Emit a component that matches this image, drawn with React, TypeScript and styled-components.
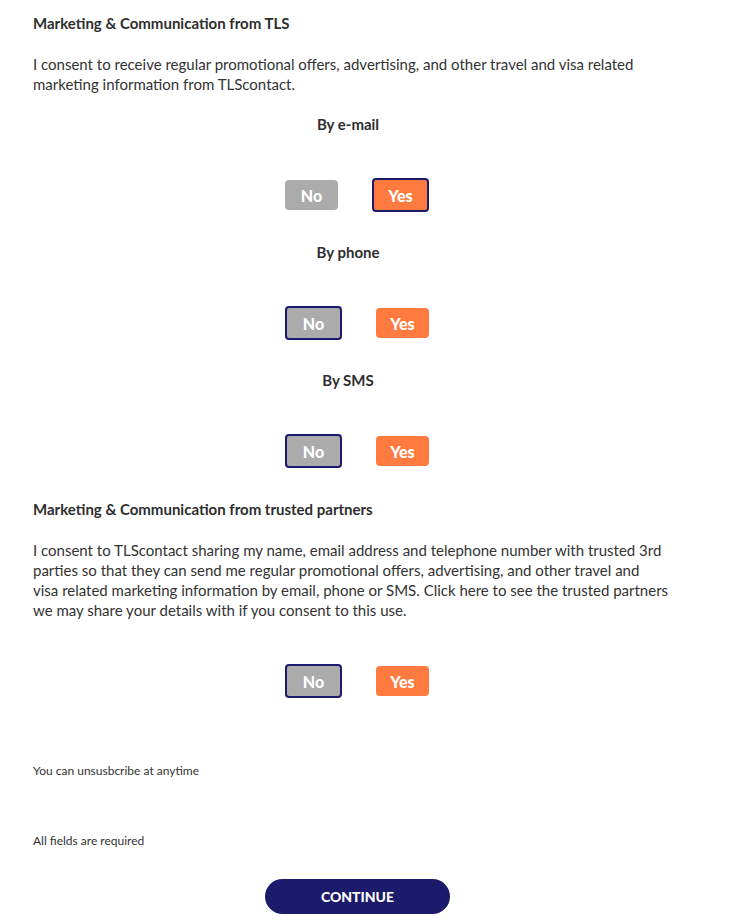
import { useState } from 'react'
import styled, { createGlobalStyle } from 'styled-components'

type Choice = 'no' | 'yes'

const GlobalStyle = createGlobalStyle`
  body {
    margin: 0;
    background: #ffffff;
    font-family: Lato, 'Open Sans', Arial, sans-serif;
    color: #333333;
  }
`

function ConsentToggle({ value, onChange }: { value: Choice; onChange: (v: Choice) => void }) {
  return (
    <StyledButtonRow>
      <StyledToggle $tone="no" $selected={value === 'no'} onClick={() => onChange('no')}>
        No
      </StyledToggle>
      <StyledToggle $tone="yes" $selected={value === 'yes'} onClick={() => onChange('yes')}>
        Yes
      </StyledToggle>
    </StyledButtonRow>
  )
}

export default function App() {
  const [email, setEmail] = useState<Choice>('yes')
  const [phone, setPhone] = useState<Choice>('no')
  const [sms, setSms] = useState<Choice>('no')
  const [partners, setPartners] = useState<Choice>('no')

  return (
    <>
      <GlobalStyle />
      <StyledPage>
        <StyledTitle>Marketing &amp; Communication from TLS</StyledTitle>
        <StyledParagraph>
          I consent to receive regular promotional offers, advertising, and other travel and visa related
          <br />
          marketing information from TLScontact.
        </StyledParagraph>

        <StyledChannelLabel $first>By e-mail</StyledChannelLabel>
        <ConsentToggle value={email} onChange={setEmail} />
        <StyledChannelLabel>By phone</StyledChannelLabel>
        <ConsentToggle value={phone} onChange={setPhone} />
        <StyledChannelLabel>By SMS</StyledChannelLabel>
        <ConsentToggle value={sms} onChange={setSms} />

        <StyledTitle $spaced>Marketing &amp; Communication from trusted partners</StyledTitle>
        <StyledParagraph>
          I consent to TLScontact sharing my name, email address and telephone number with trusted 3rd
          <br />
          parties so that they can send me regular promotional offers, advertising, and other travel and
          <br />
          visa related marketing information by email, phone or SMS. Click here to see the trusted partners
          <br />
          we may share your details with if you consent to this use.
        </StyledParagraph>
        <ConsentToggle value={partners} onChange={setPartners} />

        <StyledSmallNote $gap={66}>You can unsusbcribe at anytime</StyledSmallNote>
        <StyledSmallNote $gap={56}>All fields are required</StyledSmallNote>

        <StyledFooter>
          <StyledContinue>CONTINUE</StyledContinue>
        </StyledFooter>
      </StyledPage>
    </>
  )
}

const StyledPage = styled.main`
  display: flex;
  flex-direction: column;
  width: 630px;
  padding: 13px 0 10px 33px;
`

const StyledTitle = styled.h2<{ $spaced?: boolean }>`
  margin: ${({ $spaced }) => ($spaced ? '31px' : '0')} 0 0;
  font-size: 15px;
  line-height: 20px;
  font-weight: 700;
  color: #2e2e2e;
`

const StyledParagraph = styled.p`
  width: 660px;
  margin: 21px 0 0;
  font-size: 15px;
  line-height: 20px;
  color: #333333;
`

const StyledChannelLabel = styled.div<{ $first?: boolean }>`
  margin-top: ${({ $first }) => ($first ? '20px' : '30px')};
  text-align: center;
  font-size: 15px;
  line-height: 20px;
  font-weight: 700;
  color: #2e2e2e;
`

const StyledButtonRow = styled.div`
  display: flex;
  align-items: center;
  justify-content: center;
  gap: 34px;
  height: 34px;
  margin-top: 44px;
  padding-left: 18px;
`

const StyledToggle = styled.button<{ $tone: Choice; $selected: boolean }>`
  box-sizing: content-box;
  width: 53px;
  height: 30px;
  padding: 0;
  border: ${({ $selected }) => ($selected ? '2px solid #1b1a6b' : 'none')};
  border-radius: 4px;
  background: ${({ $tone }) => ($tone === 'yes' ? '#ff7a3e' : '#ababab')};
  color: #ffffff;
  font-family: Lato, 'Open Sans', Arial, sans-serif;
  font-size: 16px;
  font-weight: 900;
  cursor: pointer;
`

const StyledSmallNote = styled.p<{ $gap: number }>`
  margin: ${({ $gap }) => $gap}px 0 0;
  font-size: 12px;
  line-height: 14px;
  color: #333333;
`

const StyledFooter = styled.div`
  display: flex;
  justify-content: center;
  margin-top: 31px;
  padding-left: 19px;
`

const StyledContinue = styled.button`
  width: 185px;
  height: 35px;
  border: none;
  border-radius: 18px;
  background: #1b1a6b;
  color: #ffffff;
  font-family: Lato, 'Open Sans', Arial, sans-serif;
  font-size: 14px;
  font-weight: 900;
  cursor: pointer;
`
